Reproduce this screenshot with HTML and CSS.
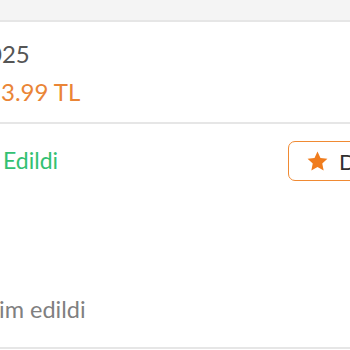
FILE: index.html
```html
<!DOCTYPE html>
<html lang="tr">
<head>
<meta charset="utf-8">
<title>Sipariş</title>
<link rel="stylesheet" href="styles.css">
</head>
<body>
<div class="top"></div>
<section class="summary">
  <div class="date">025</div>
  <div class="price">3.99 TL</div>
</section>
<section class="detail">
  <div class="status-row">
    <span class="status">Edildi</span>
    <button class="rate-btn" type="button">
      <svg class="star" viewBox="0 0 24 24" width="23" height="23" aria-hidden="true"><path d="M12 1.6l3.1 6.7 7.25.85-5.38 4.95 1.45 7.2L12 17.7l-6.42 3.6 1.45-7.2-5.38-4.95 7.25-.85z" fill="#f07c1d"/></svg>
      <span class="rate-label">Değerlendir</span>
    </button>
  </div>
  <div class="note">im edildi</div>
</section>
</body>
</html>
```
FILE: styles.css
```css
html, body {
  margin: 0;
  padding: 0;
  background: #ffffff;
  overflow: hidden;
}
body {
  width: 350px;
  font-family: Lato, "Open Sans", sans-serif;
}
.top {
  height: 20px;
  background: #f4f4f4;
  border-bottom: 2px solid #e6e6e6;
}
.summary {
  height: 82px;
  padding-top: 18px;
  border-bottom: 2px solid #e6e6e6;
  display: flex;
  flex-direction: column;
  gap: 9px;
}
.date {
  font-size: 24px;
  line-height: 1.2;
  color: #555555;
  margin-left: -12px;
}
.price {
  font-size: 24px;
  line-height: 1.2;
  color: #ea8536;
  margin-left: 1px;
}
.detail {
  height: 206px;
  padding-top: 17px;
  border-bottom: 2px solid #e6e6e6;
  display: flex;
  flex-direction: column;
}
.status-row {
  display: flex;
  align-items: center;
  width: 420px;
}
.status {
  font-size: 23px;
  line-height: 1.2;
  color: #33c172;
  margin-left: 3px;
}
.rate-btn {
  margin-left: auto;
  width: 132px;
  height: 40px;
  box-sizing: border-box;
  border: 1.5px solid #f08a33;
  border-radius: 7px;
  background: #fff;
  display: flex;
  align-items: center;
  gap: 10px;
  padding: 0 0 0 17px;
  font-family: Lato, "Open Sans", sans-serif;
  font-size: 22px;
  color: #2f2f2f;
}
.star {
  flex: none;
}
.rate-label {
  white-space: nowrap;
}
.note {
  margin-top: auto;
  margin-bottom: 24px;
  font-size: 23.5px;
  line-height: 1.2;
  color: #808080;
  margin-left: -1px;
}
```
